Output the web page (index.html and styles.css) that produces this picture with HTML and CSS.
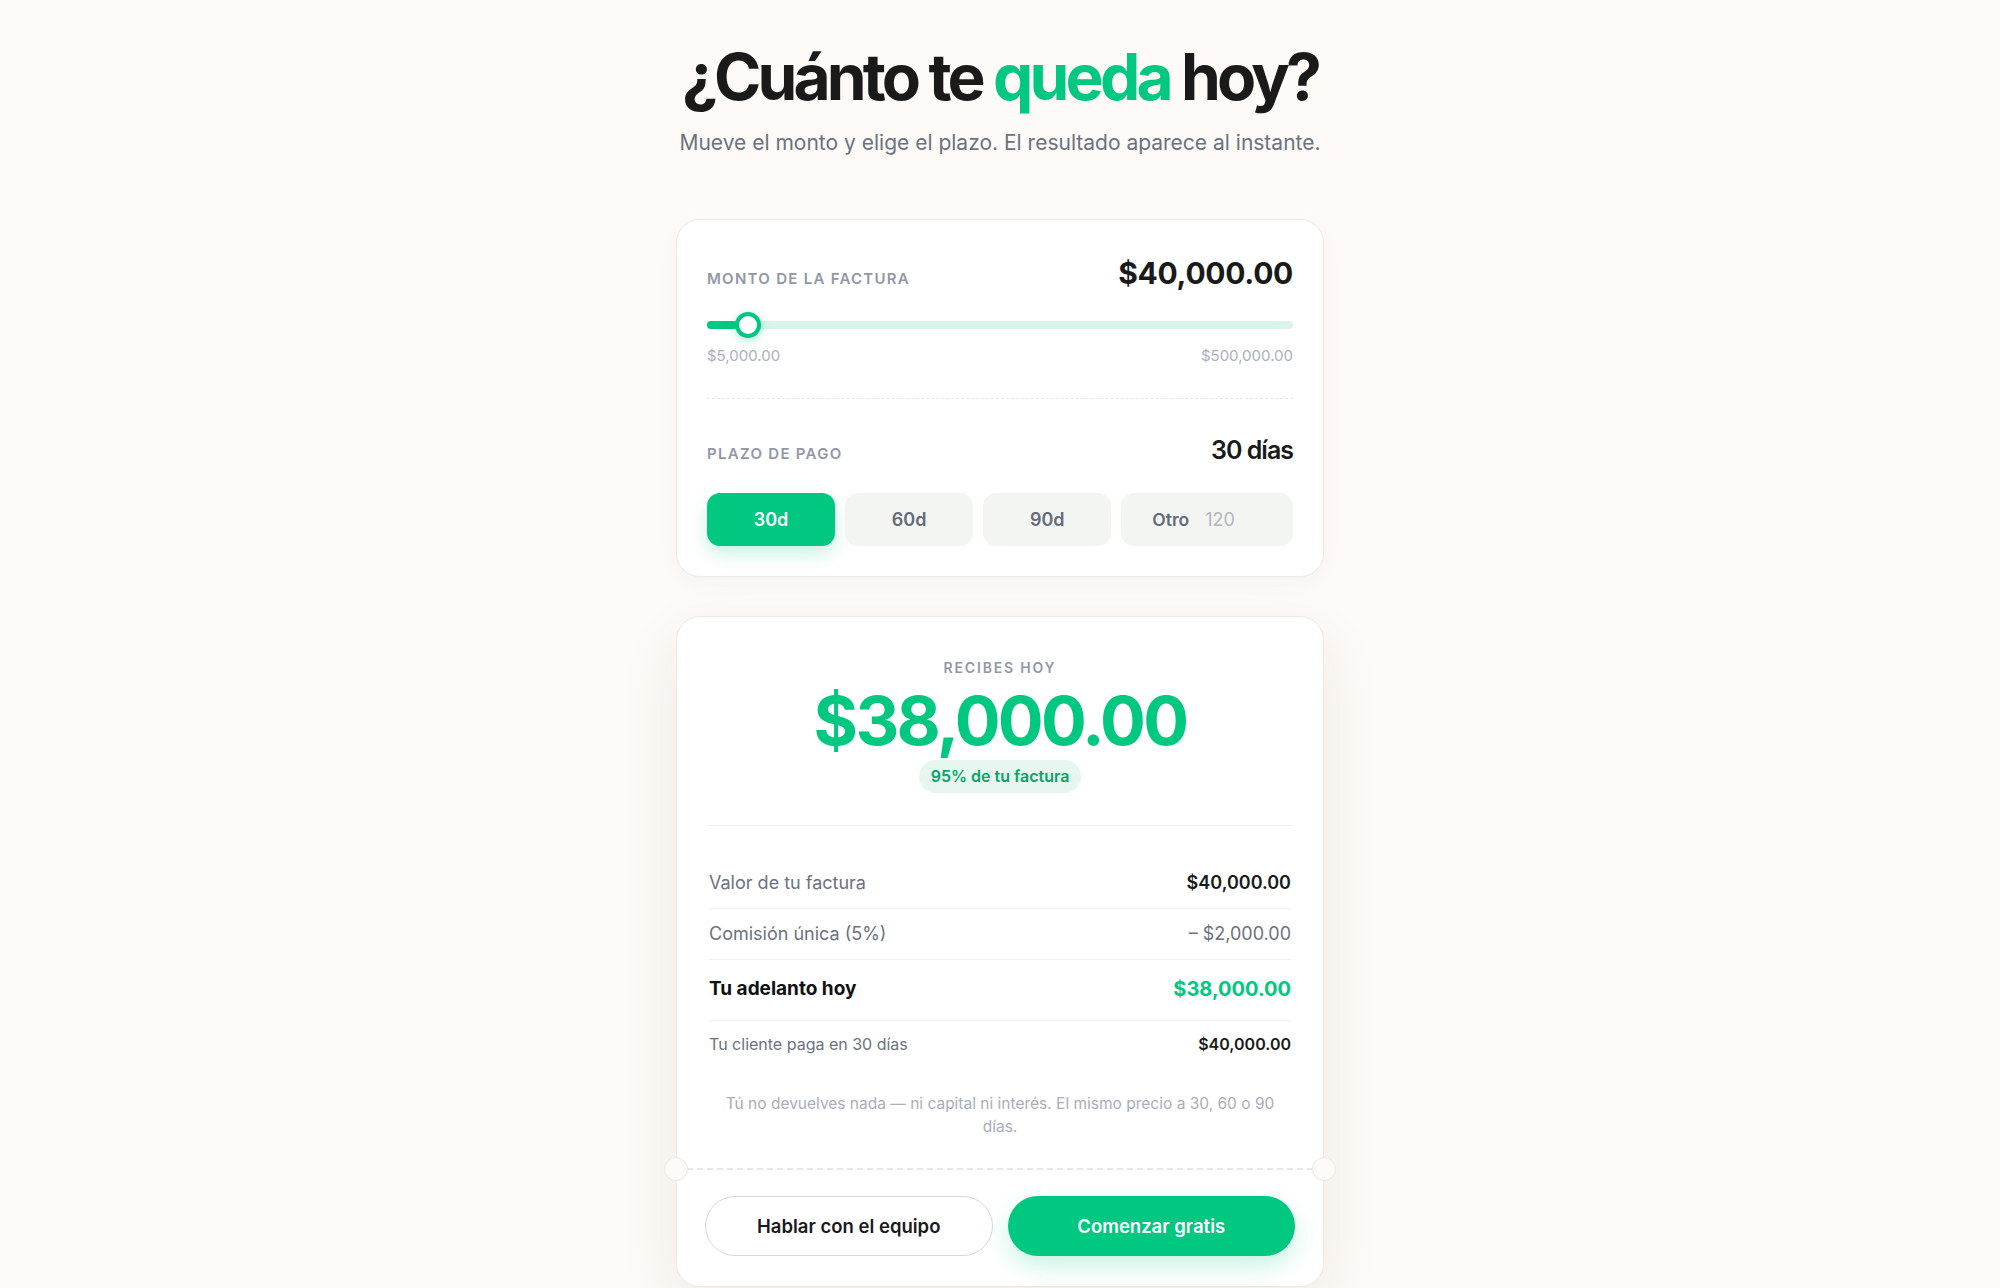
FILE: index.html
```html
<!DOCTYPE html>
<html lang="es">
<head>
  <meta charset="UTF-8" />
  <meta name="viewport" content="width=device-width, initial-scale=1.0" />
  <title>Calculadora de adelanto</title>
  <link rel="stylesheet" href="styles.css">
</head>
<body>
  <!-- Encabezado -->
  <header class="hero">
    <h1>¿Cuánto te <span class="accent">queda</span> hoy?</h1>
    <p>Mueve el monto y elige el plazo. El resultado aparece al instante.</p>
  </header>

  <!-- Controles: monto y plazo -->
  <section class="card controls">
    <div class="field-head">
      <span class="label">Monto de la factura</span>
      <span class="amount">$40,000.00</span>
    </div>

    <div class="slider">
      <div class="track"></div>
      <div class="fill" style="width: 7.07%"></div>
      <div class="thumb" style="left: 7.07%"></div>
    </div>
    <div class="range-labels">
      <span>$5,000.00</span>
      <span>$500,000.00</span>
    </div>

    <hr class="dashed" />

    <div class="field-head">
      <span class="label">Plazo de pago</span>
      <span class="days">30 días</span>
    </div>

    <div class="terms">
      <button class="term active">30d</button>
      <button class="term">60d</button>
      <button class="term">90d</button>
      <label class="term other">
        <span>Otro</span>
        <input type="text" placeholder="120" />
      </label>
    </div>
  </section>

  <!-- Resultado -->
  <section class="card result">
    <div class="result-head">
      <span class="label small">Recibes hoy</span>
      <div class="big">$38,000.00</div>
      <span class="pill">95% de tu factura</span>
    </div>

    <ul class="breakdown">
      <li><span>Valor de tu factura</span><strong>$40,000.00</strong></li>
      <li class="minus"><span>Comisión única (5%)</span><span>– $2,000.00</span></li>
      <li class="total"><span>Tu adelanto hoy</span><strong>$38,000.00</strong></li>
      <li class="client"><span>Tu cliente paga en 30 días</span><strong>$40,000.00</strong></li>
    </ul>

    <p class="note">Tú no devuelves nada — ni capital ni interés. El mismo precio a 30, 60 o 90 días.</p>

    <div class="perforation"></div>

    <div class="actions">
      <a class="btn ghost" href="#">Hablar con el equipo</a>
      <a class="btn primary" href="#">Comenzar gratis</a>
    </div>
  </section>
</body>
</html>
```

FILE: styles.css
```css
/* Reset básico */
*, *::before, *::after {
  box-sizing: border-box;
  margin: 0;
  padding: 0;
}

body {
  display: flex;
  flex-direction: column;
  align-items: center;
  background: #fdfaf7;
  color: #1a1a1a;
  font-family: 'Inter', 'Liberation Sans', sans-serif;
  padding: 42px 20px 40px;
}

/* Título y subtítulo */
.hero {
  text-align: center;
  margin-bottom: 62px;
}
.hero h1 {
  font-size: 64px;
  font-weight: 700;
  letter-spacing: -0.06em;
  line-height: 1.1;
  color: #1a1a1a;
}
.hero .accent {
  color: #00c880;
}
.hero p {
  margin-top: 16px;
  font-size: 21px;
  line-height: 29px;
  color: #6b7280;
}

/* Tarjetas */
.card {
  width: 648px;
  background: #fff;
  border: 1px solid #eeeae6;
  border-radius: 24px;
}
.controls {
  padding: 35px 30px 30px;
  box-shadow: 0 6px 20px rgba(80, 60, 40, 0.04);
}
.result {
  position: relative;
  margin-top: 39px;
  padding: 42px 28px 30px;
  box-shadow: 0 20px 60px rgba(80, 60, 40, 0.08);
}

/* Fila de etiqueta + valor, alineada por línea base */
.field-head {
  display: flex;
  justify-content: space-between;
  align-items: baseline;
  height: 36px;
}
.label {
  font-size: 15px;
  font-weight: 600;
  letter-spacing: 0.085em;
  text-transform: uppercase;
  color: #9098a6;
}
.amount {
  font-size: 30px;
  line-height: 36px;
  font-weight: 700;
  letter-spacing: -0.01em;
  color: #1a1a1a;
}
.days {
  font-size: 25px;
  line-height: 36px;
  font-weight: 600;
  letter-spacing: -0.04em;
  color: #1a1a1a;
}

/* Slider del monto */
.slider {
  position: relative;
  height: 26px;
  margin-top: 21px;
}
.slider .track,
.slider .fill {
  position: absolute;
  top: 9px;
  left: 0;
  height: 8px;
  border-radius: 4px;
}
.slider .track {
  width: 100%;
  background: #d9f5ea;
}
.slider .fill {
  background: #00c880;
}
.slider .thumb {
  position: absolute;
  top: 0;
  width: 26px;
  height: 26px;
  margin-left: -13px;
  border-radius: 50%;
  background: #fff;
  border: 4px solid #00c880;
  box-shadow: 0 2px 10px rgba(0, 200, 128, 0.35);
}
.range-labels {
  display: flex;
  justify-content: space-between;
  margin-top: 8px;
  font-size: 15px;
  line-height: 19px;
  color: #aab1bd;
}

hr.dashed {
  border: none;
  border-top: 1px dashed #e3e5e8;
  margin: 33px 0 33px;
}

/* Botones de plazo */
.terms {
  display: grid;
  grid-template-columns: 1fr 1fr 1fr 1.34fr;
  gap: 10px;
  margin-top: 25px;
}
.term {
  height: 53px;
  border: none;
  border-radius: 13px;
  background: #f3f5f3;
  color: #646b78;
  font-family: inherit;
  font-size: 18px;
  font-weight: 600;
  cursor: pointer;
}
.term.active {
  background: #00c880;
  color: #fff;
  box-shadow: 0 8px 18px rgba(0, 200, 128, 0.22);
}
.term.other {
  display: flex;
  align-items: center;
  gap: 16px;
  padding: 0 20px 0 31px;
  font-size: 17.5px;
}
.term.other input {
  width: 60px;
  border: none;
  background: transparent;
  font-family: inherit;
  font-size: 18px;
  color: #1a1a1a;
  outline: none;
}
.term.other input::placeholder {
  color: #b4b7ba;
}

/* Resultado */
.result-head {
  display: flex;
  flex-direction: column;
  align-items: center;
  margin: 0 4px;
  padding-bottom: 32px;
  border-bottom: 1px solid #eceded;
}
.label.small {
  font-size: 14px;
  line-height: 17px;
  letter-spacing: 0.13em;
}
.big {
  margin-top: 8px;
  font-size: 68px;
  font-weight: 700;
  line-height: 72px;
  letter-spacing: -0.04em;
  color: #00c880;
}
.pill {
  margin-top: 4px;
  padding: 7px 12px;
  border-radius: 999px;
  background: #e5f7ef;
  color: #0aa368;
  font-size: 16px;
  font-weight: 600;
  line-height: 19px;
}

.breakdown {
  list-style: none;
  margin: 32px 4px 0;
}
.breakdown li {
  display: flex;
  justify-content: space-between;
  align-items: center;
  padding: 13px 0;
  font-size: 18px;
  line-height: 24px;
  color: #6b7280;
  border-bottom: 1px solid #f0f0f0;
}
.breakdown li strong {
  font-weight: 600;
  color: #1a1a1a;
}
.breakdown li.total {
  padding: 17px 0 19px;
  font-size: 19px;
  font-weight: 700;
  color: #111;
}
.breakdown li.total strong {
  font-size: 20px;
  font-weight: 700;
  color: #00c880;
}
.breakdown li.client {
  border-bottom: none;
  font-size: 16px;
  line-height: 21px;
}
.breakdown li.client strong {
  font-size: 16px;
}

.note {
  margin-top: 24px;
  padding: 0 12px;
  text-align: center;
  font-size: 15.5px;
  line-height: 23px;
  color: #a8aebb;
}

/* Línea perforada con muescas laterales */
.perforation {
  position: relative;
  margin: 30px -28px 0;
  height: 0;
  border-top: 2px dashed #e6e7e9;
}
.perforation::before,
.perforation::after {
  content: '';
  position: absolute;
  top: -13px;
  width: 24px;
  height: 24px;
  border-radius: 50%;
  background: #fdfaf7;
  border: 1px solid #ece7e2;
}
.perforation::before {
  left: -13px;
}
.perforation::after {
  right: -13px;
}

/* Acciones */
.actions {
  display: grid;
  grid-template-columns: 1fr 1fr;
  gap: 15px;
  margin-top: 26px;
}
.btn {
  display: flex;
  align-items: center;
  justify-content: center;
  height: 60px;
  border-radius: 999px;
  font-size: 18.5px;
  font-weight: 600;
  text-decoration: none;
}
.btn.ghost {
  background: #fff;
  border: 1px solid #d8d8d8;
  color: #1a1a1a;
}
.btn.primary {
  background: #00c880;
  color: #fff;
  box-shadow: 0 10px 24px rgba(0, 200, 128, 0.22);
}
```
